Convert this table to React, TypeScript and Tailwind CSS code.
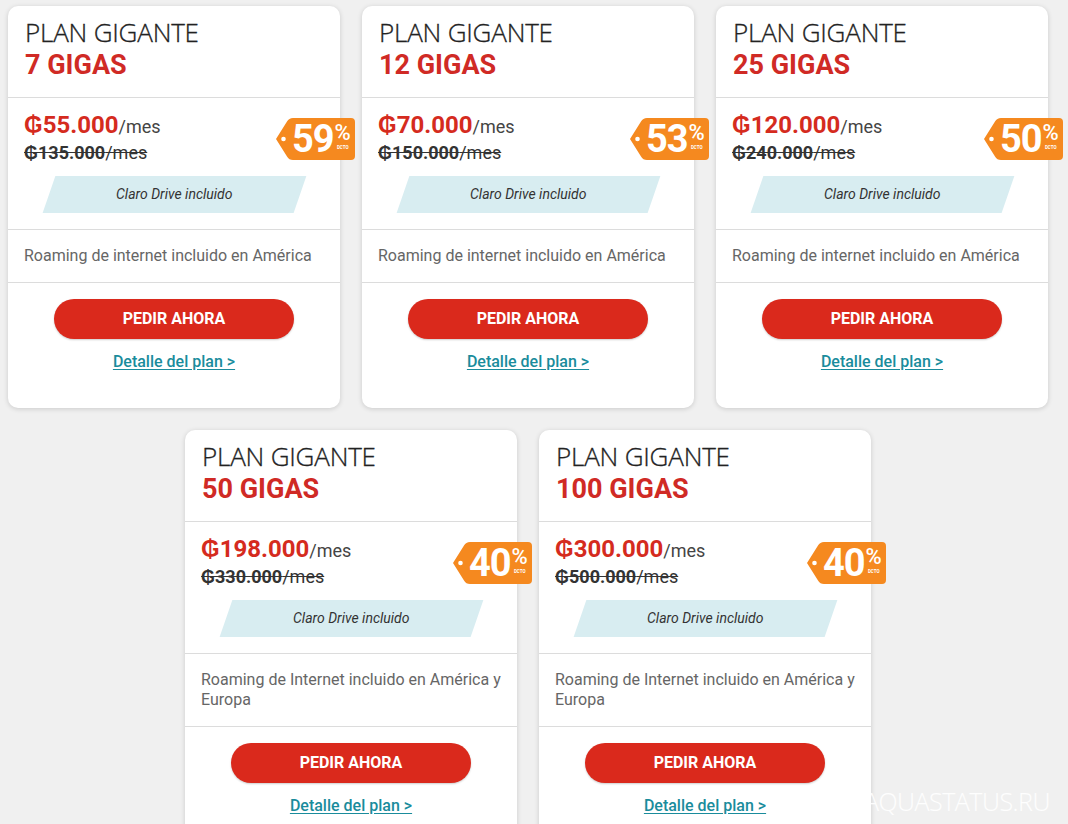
import React from 'react';

// plan data as shown in the catalogue
const plans = [
  { gigas: '7 GIGAS', price: '₲55.000', before: '₲135.000', off: '59', roaming: 'Roaming de internet incluido en América' },
  { gigas: '12 GIGAS', price: '₲70.000', before: '₲150.000', off: '53', roaming: 'Roaming de internet incluido en América' },
  { gigas: '25 GIGAS', price: '₲120.000', before: '₲240.000', off: '50', roaming: 'Roaming de internet incluido en América' },
  { gigas: '50 GIGAS', price: '₲198.000', before: '₲330.000', off: '40', roaming: 'Roaming de Internet incluido en América y Europa' },
  { gigas: '100 GIGAS', price: '₲300.000', before: '₲500.000', off: '40', roaming: 'Roaming de Internet incluido en América y Europa' },
];

type Plan = (typeof plans)[number];

const DiscountTag = ({ off }: { off: string }) => (
  <div className="absolute right-[-15px] top-[20px] w-[80px] h-[42px]">
    <svg width="80" height="42" viewBox="0 0 80 42" className="absolute inset-0">
      <path
        d="M1 21 L12 3.5 Q14 0 18 0 L76 0 Q80 0 80 4 L80 38 Q80 42 76 42 L18 42 Q14 42 12 38.5 Z"
        fill="#f5891f"
      />
      <circle cx="8.5" cy="21" r="2.3" fill="#fff" />
    </svg>
    <div className="relative flex items-center h-full pl-[17px] text-white">
      <span className="text-[38px] font-bold leading-none tracking-[-1px]">{off}</span>
      <div className="flex flex-col items-center ml-[1px] -mt-[5px]">
        <span className="text-[22px] font-medium leading-none">%</span>
        <span className="text-[4.5px] font-bold leading-none mt-[2px]">DCTO</span>
      </div>
    </div>
  </div>
);

const PlanCard = ({ plan }: { plan: Plan }) => (
  <div className="w-[332px] bg-white rounded-[10px] shadow-[0_1px_5px_rgba(0,0,0,0.16)]">
    {/* title */}
    <div className="px-[17px] pt-[13px] pb-[14px] border-b border-[#dcdcdc]">
      <div className="text-[26px] leading-[27px] font-light text-[#222] font-['Open_Sans',sans-serif] tracking-[-0.2px] [-webkit-text-stroke:0.3px_#222]">PLAN GIGANTE</div>
      <div className="mt-[2px] text-[27px] leading-[35px] font-bold text-[#d02a25]">{plan.gigas}</div>
    </div>

    {/* prices */}
    <div className="relative px-[16px] pt-[13px] pb-[16px] border-b border-[#dcdcdc]">
      <div className="leading-[28px]">
        <span className="text-[24px] font-bold text-[#d52b1e]">{plan.price}</span>
        <span className="text-[18px] text-[#444]">/mes</span>
      </div>
      <div className="text-[18px] leading-[22px] text-[#333] line-through decoration-[#333]">
        <span className="font-bold">{plan.before}</span>
        <span>/mes</span>
      </div>
      <DiscountTag off={plan.off} />
      <div className="flex justify-center mt-[12px]">
        <div className="w-[251px] h-[37px] bg-[#d8edf1] -skew-x-[19deg] flex items-center justify-center">
          <span className="skew-x-[19deg] italic text-[14px] text-[#333]">Claro Drive incluido</span>
        </div>
      </div>
    </div>

    {/* roaming */}
    <div className="px-[16px] py-[16px] border-b border-[#dcdcdc] text-[16px] leading-[20px] text-[#666]">
      {plan.roaming}
    </div>

    {/* actions */}
    <div className="flex flex-col items-center pt-[16px] pb-[36px]">
      <button className="w-[240px] h-[40px] rounded-full bg-[#da291c] text-white text-[16px] font-bold shadow-[0_1px_2px_rgba(0,0,0,0.2)]">
        PEDIR AHORA
      </button>
      <a href="#" className="mt-[13px] text-[16px] leading-[20px] font-medium text-[#1a8c9c] underline underline-offset-2">
        Detalle del plan &gt;
      </a>
    </div>
  </div>
);

export default function App() {
  return (
    <div className="relative h-[824px] overflow-hidden bg-[#f0f0f0] font-['Roboto',sans-serif]">
      <div className="w-[1056px] pt-[6px] flex flex-wrap justify-center gap-[22px]">
        {plans.map((p) => (
          <PlanCard key={p.gigas} plan={p} />
        ))}
      </div>
      {/* watermark */}
      <div className="absolute left-[864px] top-[783px] text-[25px] font-light text-white/90 font-['Open_Sans',sans-serif] tracking-[-0.5px]">
        AQUASTATUS.RU
      </div>
    </div>
  );
}
